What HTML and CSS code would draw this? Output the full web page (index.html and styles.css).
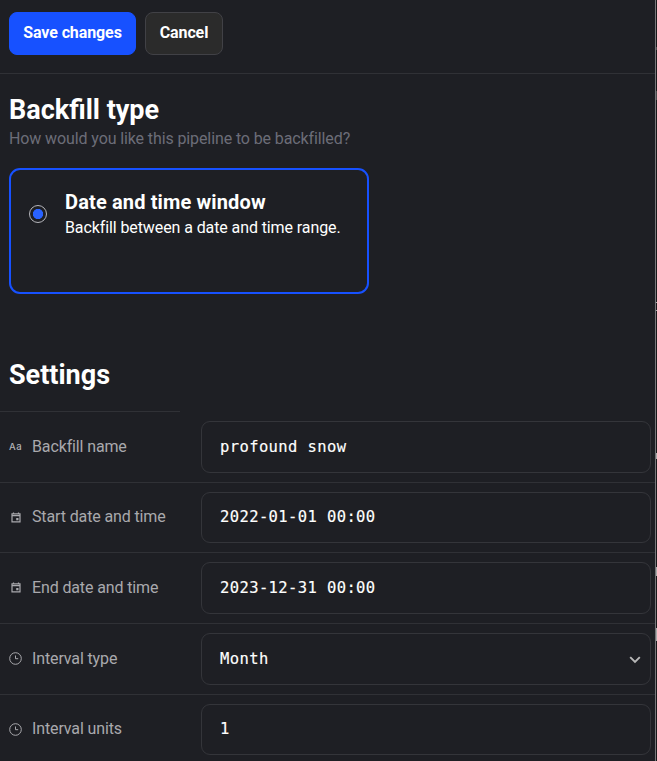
FILE: index.html
```html
<!DOCTYPE html>
<html lang="en">
<head>
<meta charset="utf-8">
<title>Backfill settings</title>
<link rel="stylesheet" href="styles.css">
</head>
<body>
<svg class="symbols" aria-hidden="true">
  <symbol id="calendar" viewBox="0 0 10 11"><path d="M1 1.8h8v8H1zM1 3.7h8M2.5.4v1.4M7.5.4v1.4" fill="none" stroke="currentColor" stroke-width="1.2"/><path d="M5.2 6h2.3v2.3H5.2z" fill="currentColor"/></symbol>
  <symbol id="clock" viewBox="0 0 13 13"><circle cx="6.5" cy="6.5" r="5.8" fill="none" stroke="currentColor"/><path d="M6.5 3.5v3.2h2.7" fill="none" stroke="currentColor"/></symbol>
</svg>
<main class="page">
  <header class="toolbar">
    <button class="button primary">Save changes</button>
    <button class="button secondary">Cancel</button>
  </header>
  <section class="type">
    <h1>Backfill type</h1>
    <p class="hint">How would you like this pipeline to be backfilled?</p>
    <div class="card">
      <span class="radio"></span>
      <div class="card-text">
        <h2>Date and time window</h2>
        <p>Backfill between a date and time range.</p>
      </div>
    </div>
  </section>
  <section class="settings">
    <h1>Settings</h1>
    <div class="rows">
      <div class="row first"><span class="icon letters">Aa</span><span class="label">Backfill name</span><div class="field"><span>profound snow</span></div></div>
      <div class="row"><svg class="icon calendar"><use href="#calendar"/></svg><span class="label high">Start date and time</span><div class="field short"><span>2022-01-01 00:00</span></div></div>
      <div class="row"><svg class="icon calendar"><use href="#calendar"/></svg><span class="label">End date and time</span><div class="field"><span>2023-12-31 00:00</span></div></div>
      <div class="row"><svg class="icon clock"><use href="#clock"/></svg><span class="label">Interval type</span><div class="field"><span>Month</span><svg class="chevron" viewBox="0 0 12 8"><path d="M1.2 1.2 6 6l4.8-4.8" fill="none" stroke="currentColor" stroke-width="1.9"/></svg></div></div>
      <div class="row"><svg class="icon clock"><use href="#clock"/></svg><span class="label high">Interval units</span><div class="field short"><span>1</span></div></div>
    </div>
  </section>
</main>
<aside class="edge"><i class="m1"></i><i class="m2"></i><i class="m3"></i><i class="m4"></i><i class="m5"></i><i class="m6"></i><i class="m7"></i></aside>
</body>
</html>
```
FILE: styles.css
```css
* { box-sizing: border-box; }
body {
  margin: 0;
  display: flex;
  height: 761px;
  overflow: hidden;
  background: #1e1f24;
  color: #fff;
  font: 16px/20px Roboto, sans-serif;
}
h1, h2, p { margin: 0; }
.symbols { display: none; }
.page { width: 655px; flex: none; }
.toolbar {
  display: flex;
  gap: 9px;
  height: 74px;
  padding: 12px 9px 0;
  border-bottom: 1px solid #303136;
}
.button {
  height: 43px;
  padding: 0 0 2px;
  border: 1px solid #1751ff;
  border-radius: 8px;
  color: #fff;
  font: 700 16px/20px Roboto, sans-serif;
  letter-spacing: -0.1px;
}
.primary { width: 127px; background: #1751ff; }
.secondary { width: 78px; background: #2b2b2b; border-color: #414146; }
.type { height: 274px; padding: 20px 9px 0; }
h1 { font-size: 27px; line-height: 32px; font-weight: 700; letter-spacing: 0; }
.hint { margin-top: 3px; color: #6c6d78; line-height: 20px; letter-spacing: -0.11px; }
.card {
  display: flex;
  width: 360px;
  height: 126px;
  margin-top: 19px;
  padding: 20px 18px;
  border: 2px solid #1751ff;
  border-radius: 11px;
}
.radio {
  width: 18px;
  height: 18px;
  margin-top: 15px;
  border: 1px solid #b5b5bb;
  border-radius: 50%;
  background: radial-gradient(circle, #2962ff 4.8px, transparent 5.4px);
}
.card-text { margin-left: 18px; }
h2 { font-size: 20px; line-height: 24px; font-weight: 700; letter-spacing: 0.14px; }
.card-text p { margin-top: 4px; line-height: 20px; white-space: nowrap; letter-spacing: -0.1px; }
.settings { padding-top: 11px; }
.settings h1 { height: 52px; padding-left: 9px; }
.rows { display: grid; grid-template-rows: 71px 70px 71px 71px 67px; }
.row {
  display: grid;
  grid-template-columns: 13px 161px 450px;
  column-gap: 9px;
  padding: 9px 0 0 9px;
  border-top: 1px solid #303136;
  color: #a9a9ad;
}
.row.first {
  border-top: 0;
  padding-top: 10px;
  background: linear-gradient(#303136, #303136) 0 0 / 180px 1px no-repeat;
}
.label { margin-top: 16px; padding-left: 1px; letter-spacing: -0.13px; }
.label.high { margin-top: 15px; }
.icon { align-self: start; justify-self: center; }
.letters { margin-top: 16px; color: #b3b3b7; font: 500 9.5px/20px Inter, sans-serif; letter-spacing: 0.5px; }
.calendar { width: 10px; height: 11px; margin-top: 20px; }
.clock { width: 13px; height: 13px; margin-top: 19px; }
.field {
  display: flex;
  justify-content: space-between;
  height: 52px;
  padding: 15px 9px 0 18px;
  border: 1px solid #34353a;
  border-radius: 9px;
  color: #fff;
  font: 15.5px/20px "DejaVu Sans Mono", monospace;
  letter-spacing: 0.39px;
  -webkit-text-stroke: 0.15px #fff;
}
.short { height: 51px; padding-top: 14px; }
.chevron { width: 12px; height: 8px; margin-top: 7px; color: #b8b8b8; }
.edge {
  position: relative;
  width: 2px;
  flex: none;
  border-left: 1px solid #77777a;
  background: #18181a;
}
.edge i { position: absolute; left: 0; width: 1px; background: #aaa; }
.m1 { top: 47px; height: 3px; opacity: .35; }
.m2 { top: 91px; height: 9px; opacity: .35; }
.m3 { top: 302px; height: 1px; }
.m4 { top: 310px; height: 1px; }
.m5 { top: 453px; height: 6px; }
.m6 { top: 567px; height: 9px; }
.m7 { top: 628px; height: 13px; }
```
